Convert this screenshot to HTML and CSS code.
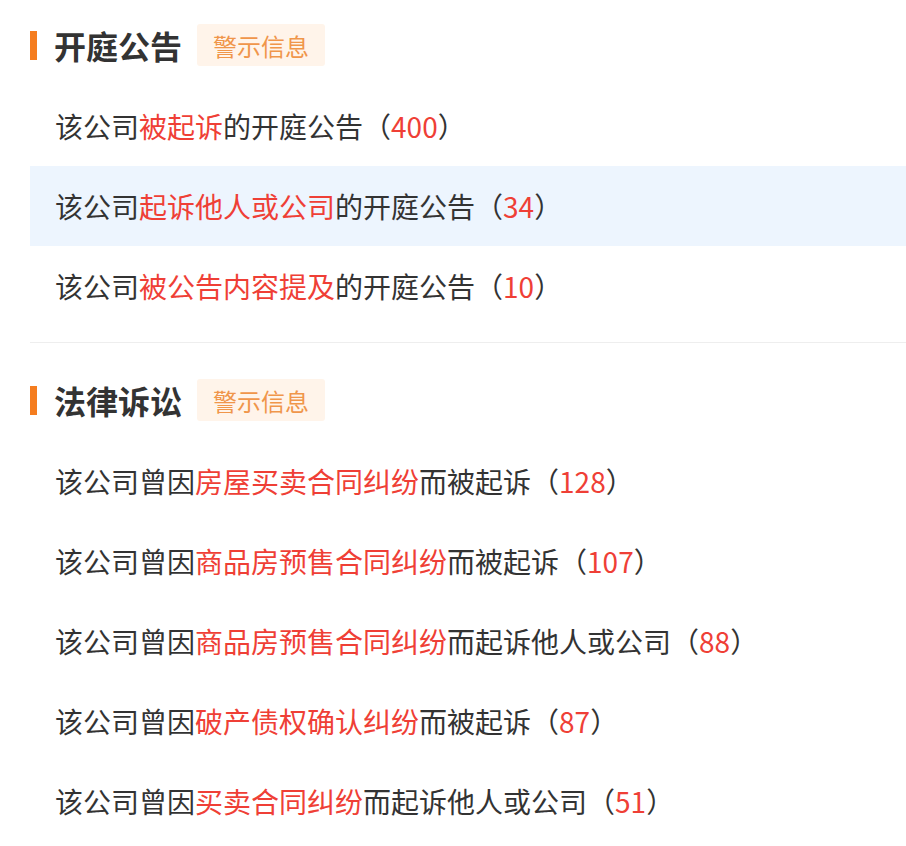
FILE: index.html
```html
<!DOCTYPE html>
<html lang="zh-CN">
<head>
<meta charset="utf-8">
<link rel="stylesheet" href="styles.css">
</head>
<body>
<div class="page">
  <section class="section">
    <div class="head">
      <span class="bar"></span>
      <h2 class="title">开庭公告</h2>
      <span class="badge">警示信息</span>
    </div>
    <ul class="rows">
      <li class="row">该公司<span class="hl">被起诉</span>的开庭公告（<span class="hl">400</span>）</li>
      <li class="row active">该公司<span class="hl">起诉他人或公司</span>的开庭公告（<span class="hl">34</span>）</li>
      <li class="row">该公司<span class="hl">被公告内容提及</span>的开庭公告（<span class="hl">10</span>）</li>
    </ul>
  </section>
  <div class="divider"></div>
  <section class="section second">
    <div class="head">
      <span class="bar"></span>
      <h2 class="title">法律诉讼</h2>
      <span class="badge">警示信息</span>
    </div>
    <ul class="rows">
      <li class="row">该公司曾因<span class="hl">房屋买卖合同纠纷</span>而被起诉（<span class="hl">128</span>）</li>
      <li class="row">该公司曾因<span class="hl">商品房预售合同纠纷</span>而被起诉（<span class="hl">107</span>）</li>
      <li class="row">该公司曾因<span class="hl">商品房预售合同纠纷</span>而起诉他人或公司（<span class="hl">88</span>）</li>
      <li class="row">该公司曾因<span class="hl">破产债权确认纠纷</span>而被起诉（<span class="hl">87</span>）</li>
      <li class="row">该公司曾因<span class="hl">买卖合同纠纷</span>而起诉他人或公司（<span class="hl">51</span>）</li>
    </ul>
  </section>
</div>
</body>
</html>
```

FILE: styles.css
```css
html, body {
  margin: 0;
  padding: 0;
  background: #ffffff;
}
body {
  font-family: "Noto Sans CJK SC", "Noto Sans", sans-serif;
  color: #333333;
}
.page {
  padding: 24px 0 0 30px;
}
.head {
  display: flex;
  align-items: center;
  height: 42px;
}
.bar {
  width: 7px;
  height: 29px;
  background: #f57d1f;
  flex: none;
}
.title {
  margin: 0 0 0 17px;
  font-size: 32px;
  font-weight: 700;
  line-height: 42px;
  color: #333333;
}
.badge {
  margin-left: 15px;
  height: 42px;
  padding: 0 16px;
  display: flex;
  align-items: center;
  background: #fff4ea;
  color: #f0964a;
  font-size: 24px;
  border-radius: 3px;
}
.rows {
  list-style: none;
  margin: 20px 0 0 0;
  padding: 0;
}
.row {
  height: 80px;
  display: flex;
  align-items: center;
  padding-left: 25px;
  font-size: 28px;
  white-space: nowrap;
}
.row.active {
  background: #edf5fe;
}
.hl {
  color: #ef3f36;
}
.divider {
  margin-top: 16px;
  height: 1px;
  background: #eeeeee;
}
.second {
  margin-top: 36px;
}
```
